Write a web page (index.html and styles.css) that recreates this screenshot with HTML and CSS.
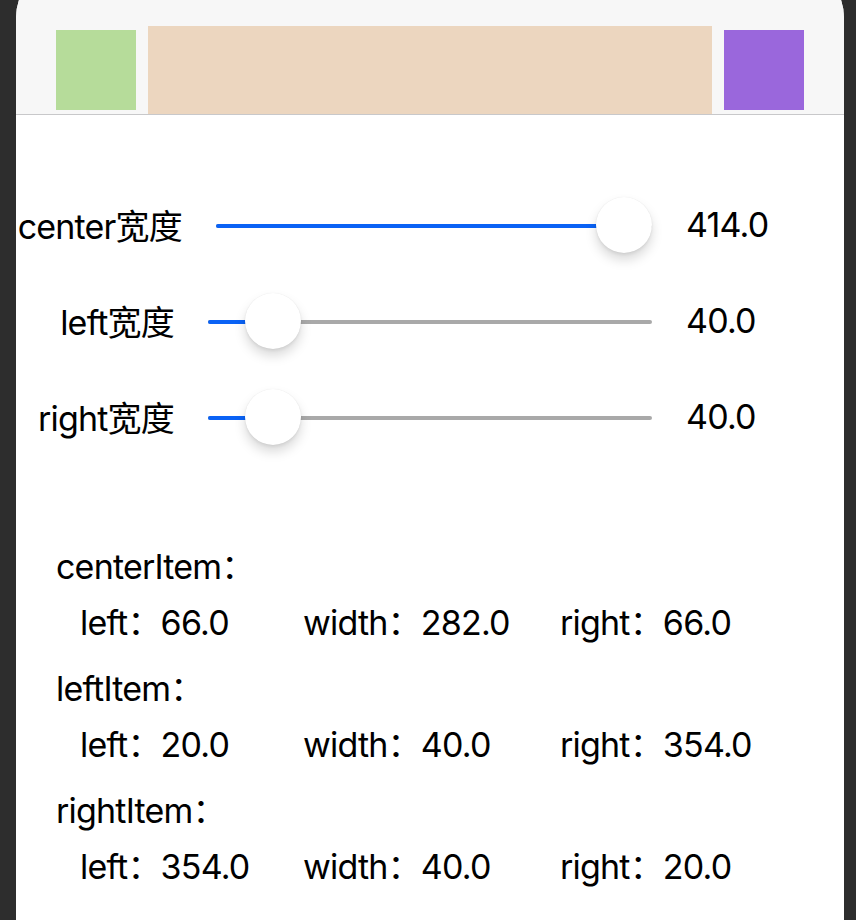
FILE: index.html
```html
<!DOCTYPE html>
<html lang="zh">
<head>
<meta charset="utf-8">
<title>Layout demo</title>
<link rel="stylesheet" href="styles.css">
</head>
<body>
<div class="screen">
  <header class="navbar">
    <div class="nav-inner">
      <div class="box box-left"></div>
      <div class="box box-center"></div>
      <div class="box box-right"></div>
    </div>
  </header>

  <section class="sliders">
    <div class="slider-row slider-row-wide">
      <div class="slider-label">center宽度</div>
      <div class="slider" style="--p:1">
        <div class="slider-track"></div>
        <div class="slider-fill"></div>
        <div class="slider-thumb"></div>
      </div>
      <div class="slider-value">414.0</div>
    </div>
    <div class="slider-row">
      <div class="slider-label">left宽度</div>
      <div class="slider" style="--p:0.0966">
        <div class="slider-track"></div>
        <div class="slider-fill"></div>
        <div class="slider-thumb"></div>
      </div>
      <div class="slider-value">40.0</div>
    </div>
    <div class="slider-row">
      <div class="slider-label">right宽度</div>
      <div class="slider" style="--p:0.0966">
        <div class="slider-track"></div>
        <div class="slider-fill"></div>
        <div class="slider-thumb"></div>
      </div>
      <div class="slider-value">40.0</div>
    </div>
  </section>

  <section class="info">
    <div class="info-group">
      <div class="info-title">centerItem：</div>
      <div class="info-row">
        <span class="info-cell">left：66.0</span>
        <span class="info-cell">width：282.0</span>
        <span class="info-cell">right：66.0</span>
      </div>
    </div>
    <div class="info-group">
      <div class="info-title">leftItem：</div>
      <div class="info-row">
        <span class="info-cell">left：20.0</span>
        <span class="info-cell">width：40.0</span>
        <span class="info-cell">right：354.0</span>
      </div>
    </div>
    <div class="info-group">
      <div class="info-title">rightItem：</div>
      <div class="info-row">
        <span class="info-cell">left：354.0</span>
        <span class="info-cell">width：40.0</span>
        <span class="info-cell">right：20.0</span>
      </div>
    </div>
  </section>
</div>
</body>
</html>
```

FILE: styles.css
```css
html, body {
  margin: 0;
  padding: 0;
  background: #2d2d2d;
  height: 100%;
  overflow: hidden;
}

body {
  font-family: Inter, "Noto Sans CJK SC", sans-serif;
  color: #000;
  font-size: 34px;
  letter-spacing: -0.8px;
}

.screen {
  margin: -38px 12px 0 16px;
  width: 828px;
  min-height: 1000px;
  background: #fff;
  border-radius: 56px 56px 0 0;
  overflow: hidden;
}

.navbar {
  background: #f7f7f7;
  padding-top: 64px;
  border-bottom: 1px solid #c8c8ca;
}

.nav-inner {
  height: 88px;
  display: flex;
  align-items: center;
  gap: 12px;
  padding: 0 40px;
}

.box {
  flex: none;
  width: 80px;
  height: 80px;
}

.box-left { background: #b6dc9a; }
.box-right { background: #9a67dc; }
.box-center {
  flex: 1;
  height: 88px;
  background: #ecd6bf;
}

.sliders {
  margin-top: 63px;
  display: flex;
  flex-direction: column;
}

.slider-row {
  height: 96px;
  display: flex;
  align-items: center;
  gap: 34px;
}

.slider-label {
  flex: none;
  width: 158px;
  text-align: right;
  white-space: nowrap;
  padding-bottom: 3px;
}

.slider-row-wide .slider-label {
  width: 166px;
}

.slider {
  flex: 1;
  position: relative;
  height: 56px;
}

.slider-track,
.slider-fill {
  position: absolute;
  left: 0;
  top: 26px;
  height: 4px;
  border-radius: 2px;
}

.slider-track {
  right: 0;
  background: #a9a9a9;
}

.slider-fill {
  width: calc(var(--p) * (100% - 56px) + 28px);
  background: #0a62f5;
}

.slider-thumb {
  position: absolute;
  top: -1px;
  left: calc(var(--p) * (100% - 56px));
  width: 56px;
  height: 56px;
  border-radius: 50%;
  background: #fff;
  box-shadow: 0 7px 12px rgba(0, 0, 0, 0.15), 0 2px 3px rgba(0, 0, 0, 0.06), 0 0 1px rgba(0, 0, 0, 0.1);
}

.slider-value {
  flex: none;
  width: 158px;
  white-space: nowrap;
  padding-bottom: 3px;
}

.info {
  margin-top: 81px;
  display: flex;
  flex-direction: column;
  gap: 26px;
}

.info-group {
  display: flex;
  flex-direction: column;
  gap: 16px;
}

.info-title {
  line-height: 40px;
  padding-left: 40px;
}

.info-row {
  line-height: 40px;
  padding-left: 64px;
  display: grid;
  grid-template-columns: 223px 257px auto;
  white-space: nowrap;
}
```
